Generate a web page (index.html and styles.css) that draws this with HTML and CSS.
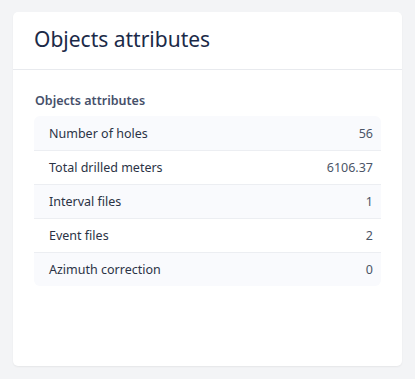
FILE: index.html
```html
<!DOCTYPE html>
<html>
<head>
<meta charset="utf-8">
<link rel="stylesheet" href="styles.css">
</head>
<body>
<div class="card">
  <div class="card-header">
    <h1 class="title">Objects attributes</h1>
  </div>
  <div class="card-body">
    <h2 class="subtitle">Objects attributes</h2>
    <div class="table">
      <div class="row"><span class="label">Number of holes</span><span class="value">56</span></div>
      <div class="row"><span class="label">Total drilled meters</span><span class="value">6106.37</span></div>
      <div class="row"><span class="label">Interval files</span><span class="value">1</span></div>
      <div class="row"><span class="label">Event files</span><span class="value">2</span></div>
      <div class="row"><span class="label">Azimuth correction</span><span class="value">0</span></div>
    </div>
  </div>
</div>
</body>
</html>
```
FILE: styles.css
```css
html, body {
  margin: 0;
  padding: 0;
}
body {
  background: #f3f4f6;
  font-family: "Noto Sans", "Open Sans", sans-serif;
  padding: 12px 13px 13px 13px;
  height: 379px;
  box-sizing: border-box;
}
.card {
  background: #ffffff;
  border-radius: 5px;
  box-shadow: 0 1px 2px rgba(0,0,0,0.06);
  height: 354px;
  display: flex;
  flex-direction: column;
}
.card-header {
  height: 58px;
  box-sizing: border-box;
  border-bottom: 1px solid #e8eaee;
  padding: 0 21px 2px 21px;
  display: flex;
  align-items: center;
}
.title {
  margin: 0;
  font-size: 21px;
  font-weight: 400;
  color: #1b2a48;
  line-height: 1;
}
.card-body {
  padding: 22px 21px 0 21px;
}
.subtitle {
  margin: 0 0 7px 1px;
  font-size: 12.5px;
  font-weight: 600;
  color: #46506a;
  line-height: 17px;
}
.table {
  border-radius: 6px;
  overflow: hidden;
}
.row {
  display: flex;
  justify-content: space-between;
  align-items: center;
  height: 34px;
  box-sizing: border-box;
  padding: 0 8px 0 15px;
  font-size: 12.5px;
  color: #2b3345;
}
.row + .row {
  border-top: 1px solid #eceef2;
}
.row:nth-child(odd) {
  background: #f9fafd;
}
.value {
  color: #4b5567;
}
```
